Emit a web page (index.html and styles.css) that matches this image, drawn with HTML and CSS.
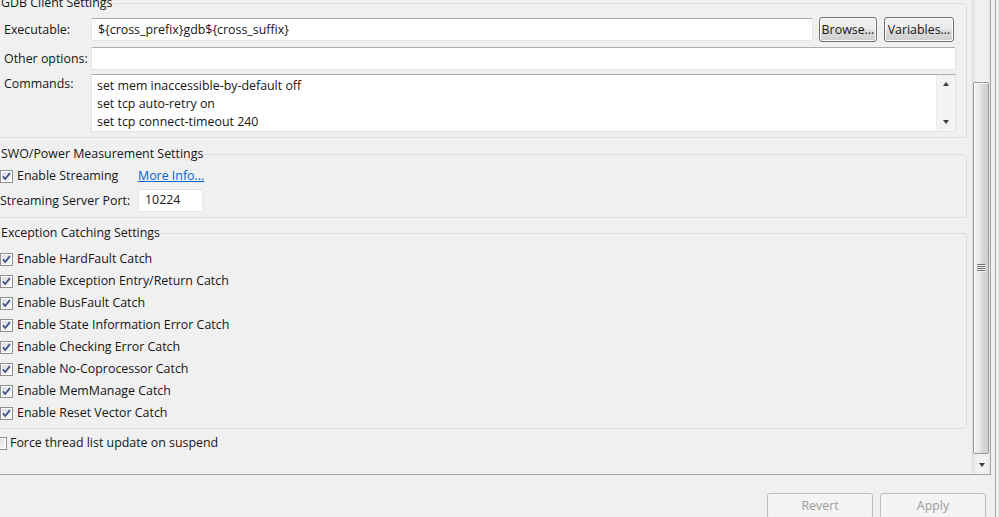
FILE: index.html
```html
<!DOCTYPE html>
<html>
<head>
<meta charset="utf-8">
<title>Debugger settings</title>
<link rel="stylesheet" href="styles.css">
</head>
<body>
<svg class="defs" width="0" height="0" aria-hidden="true">
  <defs>
    <linearGradient id="cbfill" x1="0" y1="0" x2="1" y2="1">
      <stop offset="0" stop-color="#d9dce1"/>
      <stop offset="1" stop-color="#f7f7f8"/>
    </linearGradient>
    <symbol id="cb-on" viewBox="0 0 13 13">
      <rect x="0.5" y="0.5" width="12" height="12" fill="#ffffff" stroke="#8e8f8f"/>
      <rect x="2" y="2" width="9" height="9" fill="url(#cbfill)"/>
      <path d="M3 6.4 L5.2 9 L9.9 3.1" fill="none" stroke="#3b4f83" stroke-width="1.7"/>
    </symbol>
    <symbol id="cb-off" viewBox="0 0 13 13">
      <rect x="0.5" y="0.5" width="12" height="12" fill="#ffffff" stroke="#8e8f8f"/>
      <rect x="2" y="2" width="9" height="9" fill="url(#cbfill)"/>
    </symbol>
  </defs>
</svg>
<div class="window">
  <div class="pane">
    <div class="viewport">
      <div class="scroller">
        <fieldset class="group gdb">
          <legend>GDB Client Settings</legend>
          <div class="gdb-grid">
            <div class="lbl">Executable:</div>
            <div class="exec-row">
              <div class="field grow">${cross_prefix}gdb${cross_suffix}</div>
              <div class="btn w58">Browse...</div>
              <div class="btn w70">Variables...</div>
            </div>
            <div class="lbl">Other options:</div>
            <div class="field other"></div>
            <div class="lbl top">Commands:</div>
            <div class="memo">
              <div class="memo-text">
                <div>set mem inaccessible-by-default off</div>
                <div>set tcp auto-retry on</div>
                <div>set tcp connect-timeout 240</div>
              </div>
              <div class="memo-bar">
                <span class="tri up"></span>
                <span class="tri down"></span>
              </div>
            </div>
          </div>
        </fieldset>

        <fieldset class="group swo">
          <legend>SWO/Power Measurement Settings</legend>
          <div class="swo-grid">
            <div class="check"><svg class="cb"><use href="#cb-on"/></svg><span>Enable Streaming</span></div>
            <div class="link">More Info...</div>
            <div class="lbl2">Streaming Server Port:</div>
            <div class="field port">10224</div>
          </div>
        </fieldset>

        <fieldset class="group exc">
          <legend>Exception Catching Settings</legend>
          <div class="checks">
            <div class="check"><svg class="cb"><use href="#cb-on"/></svg><span>Enable HardFault Catch</span></div>
            <div class="check"><svg class="cb"><use href="#cb-on"/></svg><span>Enable Exception Entry/Return Catch</span></div>
            <div class="check"><svg class="cb"><use href="#cb-on"/></svg><span>Enable BusFault Catch</span></div>
            <div class="check"><svg class="cb"><use href="#cb-on"/></svg><span>Enable State Information Error Catch</span></div>
            <div class="check"><svg class="cb"><use href="#cb-on"/></svg><span>Enable Checking Error Catch</span></div>
            <div class="check"><svg class="cb"><use href="#cb-on"/></svg><span>Enable No-Coprocessor Catch</span></div>
            <div class="check"><svg class="cb"><use href="#cb-on"/></svg><span>Enable MemManage Catch</span></div>
            <div class="check"><svg class="cb"><use href="#cb-on"/></svg><span>Enable Reset Vector Catch</span></div>
          </div>
        </fieldset>

        <div class="check force"><svg class="cb"><use href="#cb-off"/></svg><span>Force thread list update on suspend</span></div>
      </div>
    </div>
    <div class="vscroll">
      <div class="thumb">
        <div class="grip"></div>
      </div>
      <div class="arrow-btn"><span class="tri down"></span></div>
    </div>
  </div>
  <div class="buttonbar">
    <div class="btn big disabled">Revert</div>
    <div class="btn big disabled">Apply</div>
  </div>
</div>
</body>
</html>
```

FILE: styles.css
```css
html, body {
  margin: 0;
  padding: 0;
}

body {
  width: 999px;
  height: 517px;
  overflow: hidden;
  background: #f0f0f0;
  font-family: "Segoe UI", "Open Sans", "Noto Sans", sans-serif;
  font-size: 12.4px;
  color: #161616;
}

.defs {
  position: absolute;
  width: 0;
  height: 0;
}

.window {
  width: 995px;
  height: 517px;
  border-right: 1px solid #a9a9a9;
  display: flex;
  flex-direction: column;
}

.pane {
  flex: none;
  width: 990px;
  height: 474px;
  border-right: 1px solid #a4a4a4;
  border-bottom: 1px solid #a4a4a4;
  display: flex;
}

.viewport {
  width: 972px;
  height: 474px;
  overflow: hidden;
  flex: none;
}

.scroller {
  width: 978px;
  margin: -5px 0 0 -6px;
}

/* group boxes */
.group {
  margin: 0 5px 0 0;
  padding: 0;
  border: 1px solid #d5dfe5;
  border-radius: 3px;
  min-width: 0;
}

.group legend {
  margin-left: 0;
  padding: 0 1px;
  line-height: 16px;
  color: #161616;
}

.gdb legend {
  margin-left: -4px;
}

.gdb {
  padding: 6px 10px 4px 9px;
}

.gdb-grid {
  display: grid;
  grid-template-columns: 87px 1fr;
  grid-template-rows: 25px 23px 58px;
  row-gap: 5px;
}

.gdb-grid .memo {
  margin-top: -1px;
}

.lbl {
  align-self: center;
  line-height: 16px;
}

.lbl.top {
  align-self: start;
  padding-top: 1px;
}

.exec-row {
  display: flex;
  align-items: center;
  gap: 6px;
  margin-right: 2px;
}

.field {
  box-sizing: border-box;
  background: #ffffff;
  border: 1px solid #e2e3ea;
  border-top-color: #abadb3;
  border-radius: 2px;
  line-height: 16px;
  padding: 2px 6px;
}

.grow {
  flex: 1;
  height: 23px;
  padding-top: 3px;
}

.other {
  height: 23px;
}

.btn {
  box-sizing: border-box;
  height: 25px;
  border: 1px solid #707070;
  border-radius: 3px;
  background: linear-gradient(#f2f2f2 0%, #ebebeb 48%, #dddddd 52%, #cfcfcf 100%);
  box-shadow: inset 0 0 0 1px #fcfcfc;
  display: flex;
  align-items: center;
  justify-content: center;
  line-height: 16px;
  white-space: nowrap;
}

.w58 { width: 58px; }
.w70 { width: 70px; margin-left: 1px; }

.memo {
  box-sizing: border-box;
  height: 58px;
  background: #ffffff;
  border: 1px solid #e2e3ea;
  border-top-color: #abadb3;
  display: flex;
}

.memo-text {
  flex: 1;
  padding: 2px 5px 0;
  line-height: 18px;
}

.memo-bar {
  width: 18px;
  background: #f4f4f4;
  border-left: 1px solid #ececec;
  display: flex;
  flex-direction: column;
  justify-content: space-between;
  align-items: center;
  padding: 7px 0 7px;
}

.tri {
  display: block;
  width: 0;
  height: 0;
  border-left: 3.5px solid transparent;
  border-right: 3.5px solid transparent;
}

.tri.up {
  border-bottom: 4px solid #3e3e3e;
}

.tri.down {
  border-top: 4px solid #3e3e3e;
}

/* SWO */
.swo {
  margin-top: 8px;
  padding: 6px 10px 5px 5px;
}

.swo-grid {
  display: grid;
  grid-template-columns: 138px 1fr;
  grid-template-rows: 16px 23px;
  row-gap: 5px;
  align-items: center;
}

.link {
  color: #0066cc;
  text-decoration: underline;
  line-height: 16px;
}

.lbl2 {
  line-height: 16px;
}

.port {
  width: 65px;
  height: 23px;
  padding: 2px 6px;
  border-color: #e7e7e7;
  border-top-color: #e0e0e0;
}

/* exception */
.exc {
  margin-top: 7px;
  padding: 7px 10px 4px 5px;
}

.checks {
  display: flex;
  flex-direction: column;
}

.check {
  display: flex;
  align-items: center;
  gap: 4px;
  height: 22px;
  line-height: 16px;
  white-space: nowrap;
}

.swo-grid .check {
  height: 16px;
}

.cb {
  width: 13px;
  height: 13px;
  flex: none;
}

.force {
  margin-top: 3px;
}

.force .cb + span {
  margin-left: -1px;
}

/* outer scrollbar */
.vscroll {
  flex: none;
  width: 17px;
  border-left: 1px solid #dcdcdc;
  background: linear-gradient(to right, #e6e6e6 0%, #f1f1f1 25%, #f1f1f1 75%, #e8e8e8 100%);
  display: flex;
  flex-direction: column;
}

.thumb {
  box-sizing: border-box;
  margin: 82px 1px 0 0;
  height: 372px;
  border: 1px solid #989898;
  border-radius: 2px;
  background: linear-gradient(to right, #f4f4f4 0%, #e6e6e6 45%, #d9d9d9 55%, #cfcfcf 100%);
  box-shadow: inset 1px 1px 0 #ffffff;
  display: flex;
  align-items: center;
  justify-content: center;
}

.grip {
  width: 8px;
  height: 8px;
  background: repeating-linear-gradient(#5a5a5a 0 1px, #f4f4f4 1px 2px);
  opacity: 0.8;
}

.arrow-btn {
  margin-top: auto;
  height: 19px;
  display: flex;
  align-items: center;
  justify-content: center;
}

/* bottom */
.buttonbar {
  display: flex;
  justify-content: flex-end;
  gap: 7px;
  padding: 18px 9px 0 0;
}

.btn.big {
  width: 106px;
  height: 26px;
}

.btn.disabled {
  color: #9c9c9c;
  border-color: #bdbdbd;
  background: #f4f4f4;
  box-shadow: none;
}
```
